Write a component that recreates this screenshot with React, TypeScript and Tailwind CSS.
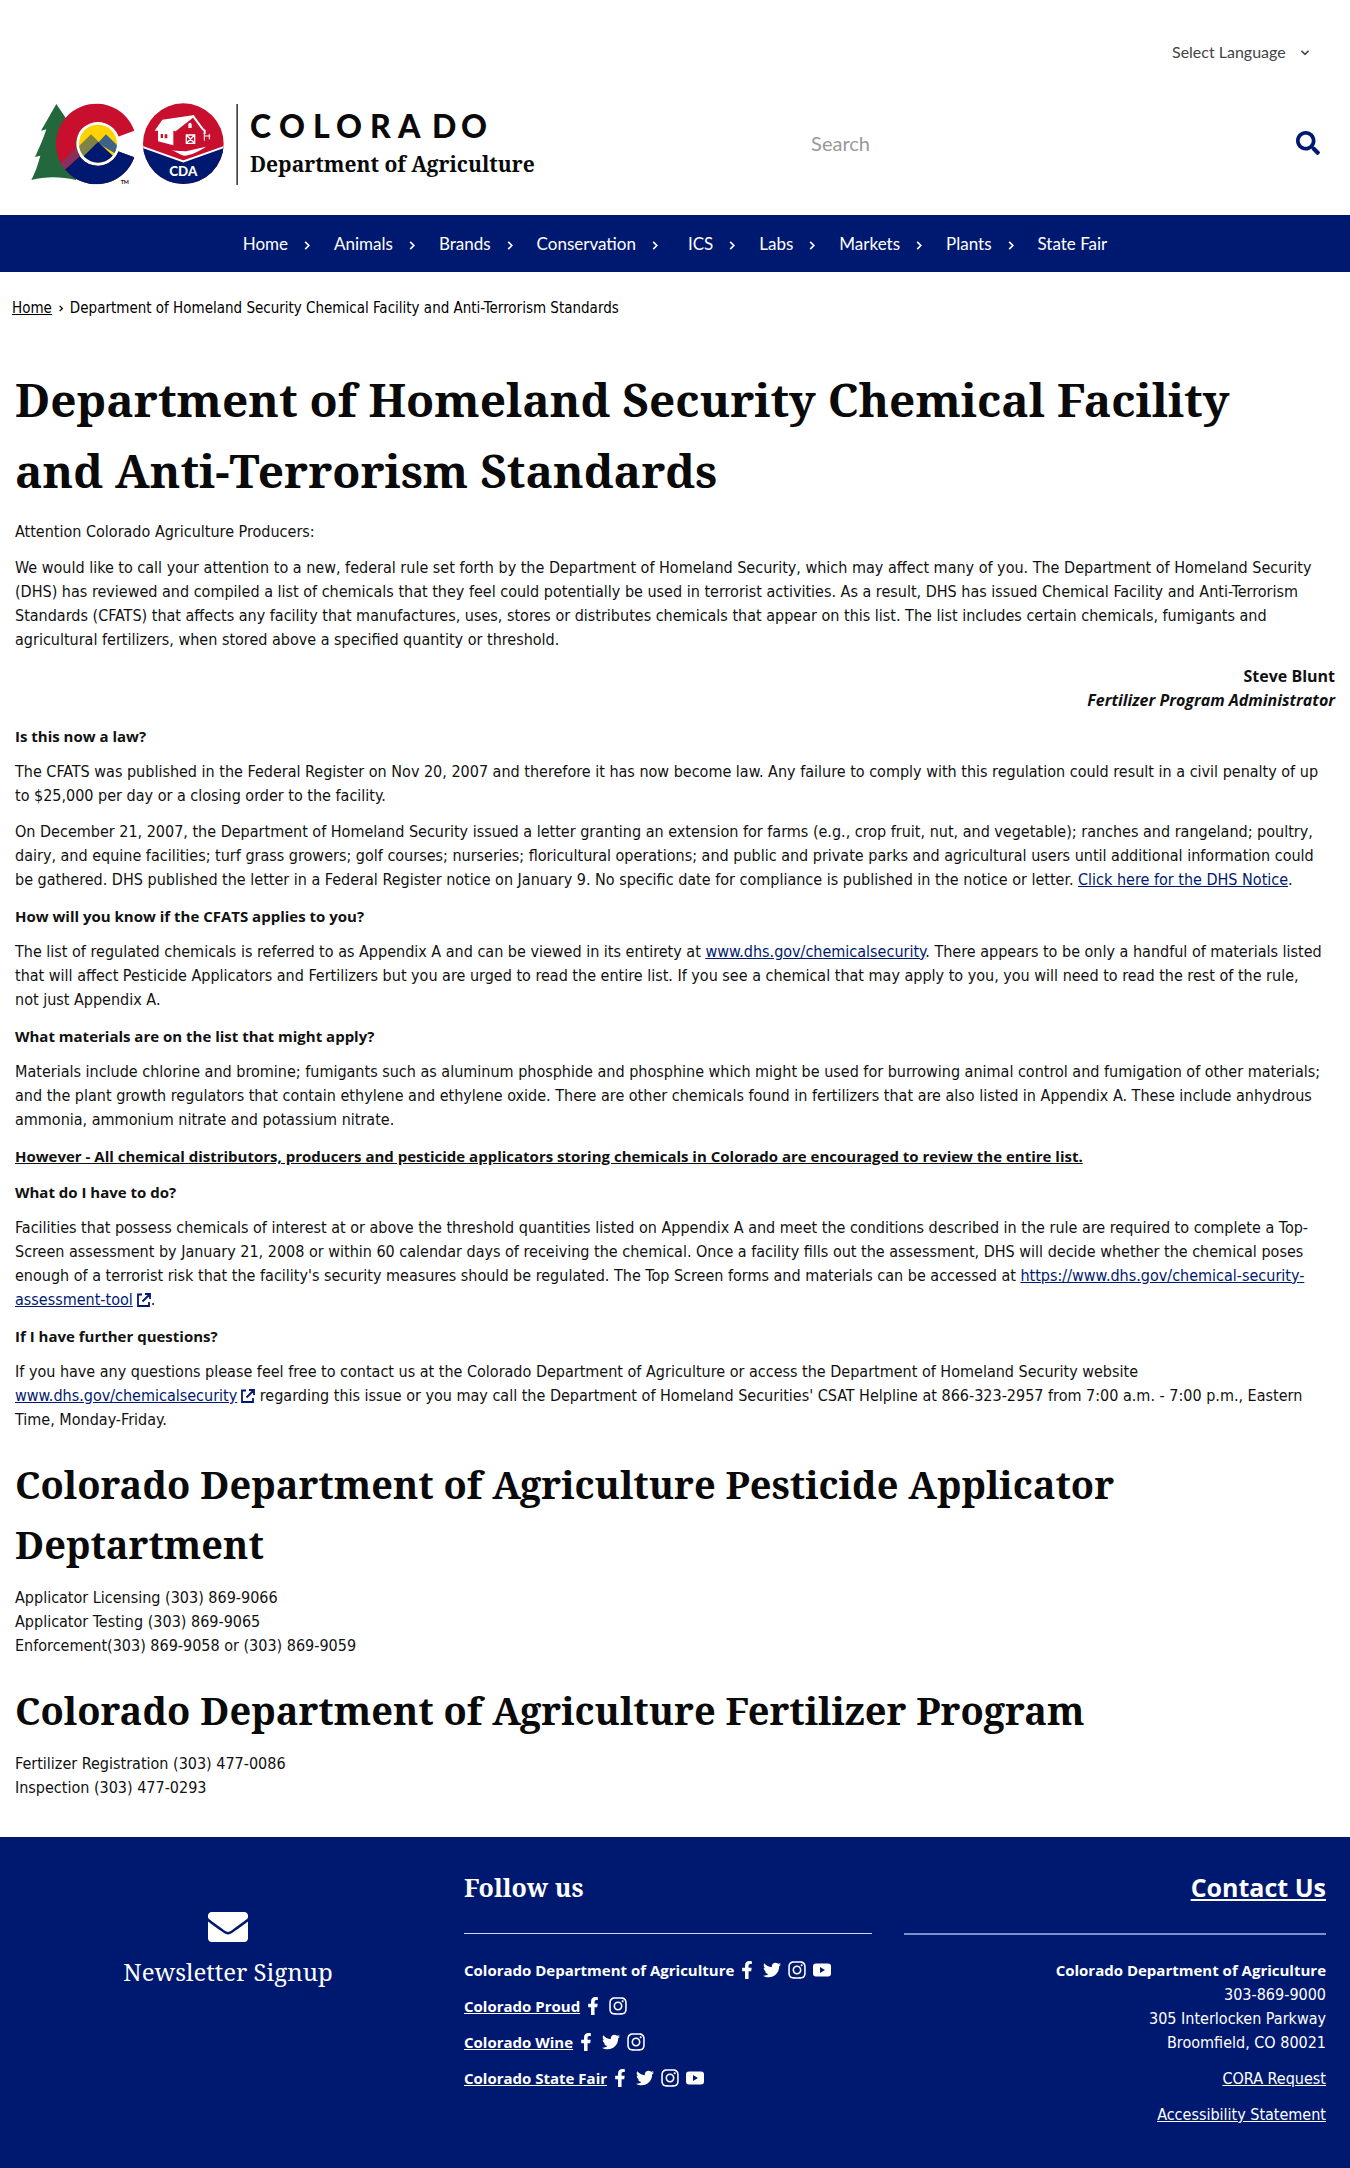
import React from "react";
import { FaEnvelope, FaFacebookF, FaInstagram, FaSearch, FaTwitter } from "react-icons/fa";

const NAV = ["Home", "Animals", "Brands", "Conservation", "ICS", "Labs", "Markets", "Plants", "State Fair"];

function Logo() {
  return (
    <svg viewBox="0 0 512 84" className="h-[84px] w-[512px]" role="img" aria-label="Colorado Department of Agriculture">
      <defs>
        <clipPath id="disc">
          <circle cx="216" cy="137" r="57" />
        </clipPath>
        <clipPath id="cshape">
          <path d="M325 98A121 121 0 1 0 325 178L276 160A65 65 0 1 1 276 116Z" />
        </clipPath>
        <clipPath id="seal">
          <circle cx="148" cy="137" r="121" />
        </clipPath>
      </defs>
      <g transform="translate(-4 -5) scale(0.3333)">
        <path
          d="M91 18L45 98L61 94C52 122 40 150 27 177L43 173C36 200 27 225 16 246C60 235 105 236 150 246L170 120L120 61Z"
          fill="#23683d"
        />
        <g clipPath="url(#cshape)">
          <rect x="90" y="10" width="240" height="260" fill="#c8102e" />
          <path d="M90 210L160 140L160 180L120 212L90 240Z" fill="#8a2f5b" />
          <path d="M112 220L165 172L216 137L325 150L325 270L112 270Z" fill="#001970" />
        </g>
        <circle cx="216" cy="137" r="65" fill="#fff" />
        <g clipPath="url(#disc)">
          <rect x="150" y="70" width="140" height="140" fill="#ffd200" />
          <path d="M150 153L195 109L219 132L216 150L150 210Z" fill="#7f8446" />
          <path d="M216 134L240 109L290 158L290 180L240 150Z" fill="#3d6488" />
          <path d="M145 202L216 132L290 200V210H145Z" fill="#001970" />
        </g>
        <text x="284" y="258" fontSize="16" fontWeight="700" className="font-['Lato',sans-serif]" fill="#111">
          TM
        </text>
      </g>
      <g transform="translate(104 -5) scale(0.3333)">
        <g clipPath="url(#seal)">
          <rect x="20" y="10" width="260" height="260" fill="#c8102e" />
          <path d="M20 145L148 191L276 145V270H20Z" fill="#001970" />
          <path d="M20 145L148 190L276 145" fill="none" stroke="#fff" strokeWidth="6" />
        </g>
        <path d="M62 98L85 65L182 51L124 98L118 98L118 142L72 130L72 98Z" fill="#fff" />
        <path d="M80 108H87V120H80ZM92 109H100V121H92Z" fill="#c8102e" />
        <path d="M122 98L178 55L205 92L212 98V108" fill="none" stroke="#fff" strokeWidth="6" />
        <path d="M163 90V80A5 6 0 0 1 173 80V90Z" fill="#fff" />
        <path d="M157 111H182V136H157ZM157 111L182 136M182 111L157 136" fill="none" stroke="#fff" strokeWidth="4" />
        <path d="M211 106V128M226 108V124M211 114H229" fill="none" stroke="#fff" strokeWidth="3" />
        <path d="M112 156C130 160 140 158 156 160L216 146C195 160 172 172 150 173C138 170 128 162 112 156Z" fill="#fff" />
        <text
          x="148"
          y="235"
          textAnchor="middle"
          fontSize="40"
          fontWeight="900"
          fill="#fff"
          className="font-['Lato',sans-serif]"
        >
          CDA
        </text>
        <rect x="307" y="18" width="5" height="243" fill="#444" />
      </g>
      <text
        x="220 249 283 306 340 368 402 431"
        y="35"
        fontSize="32"
        fontWeight="900"
        className="font-['Lato',sans-serif]"
        fill="#0a0a0a"
      >
        COLORADO
      </text>
      <text x="220" y="69" fontSize="21" fontWeight="700" className="font-['Noto_Serif',serif]" fill="#0a0a0a">
        Department of Agriculture
      </text>
    </svg>
  );
}

function Chevron({ className }: { className: string }) {
  return (
    <svg viewBox="0 0 6 10" className={className} fill="none" stroke="currentColor" strokeWidth="1.8" aria-hidden="true">
      <path d="M1 1L5 5L1 9" />
    </svg>
  );
}

function ExternalIcon() {
  return (
    <svg
      viewBox="0 0 14 14"
      className="ml-1 inline-block size-[14px] align-[-2px] text-[#001970]"
      fill="none"
      stroke="currentColor"
      strokeWidth="1.8"
      aria-hidden="true"
    >
      <path d="M5 1.5H1V13H12V9M8 1H13V6M13 1L5.5 8.5" />
    </svg>
  );
}

function YouTubeIcon() {
  return (
    <svg viewBox="0 0 18 18" className="size-[18px]" fill="currentColor" aria-hidden="true">
      <path
        fillRule="evenodd"
        d="M3 2.5H15Q18 2.5 18 5.5V12.5Q18 15.5 15 15.5H3Q0 15.5 0 12.5V5.5Q0 2.5 3 2.5ZM7 6V12L12 9Z"
      />
    </svg>
  );
}

const ICONS = {
  facebook: <FaFacebookF className="size-[18px]" />,
  twitter: <FaTwitter className="size-[18px]" />,
  instagram: <FaInstagram className="size-5" />,
  youtube: <YouTubeIcon />,
};

type Network = keyof typeof ICONS;

const SOCIAL: { name: string; linked: boolean; networks: Network[] }[] = [
  { name: "Colorado Department of Agriculture", linked: false, networks: ["facebook", "twitter", "instagram", "youtube"] },
  { name: "Colorado Proud", linked: true, networks: ["facebook", "instagram"] },
  { name: "Colorado Wine", linked: true, networks: ["facebook", "twitter", "instagram"] },
  { name: "Colorado State Fair", linked: true, networks: ["facebook", "twitter", "instagram", "youtube"] },
];

function A({ children }: { children: React.ReactNode }) {
  return (
    <a href="#" className="text-[#001970] underline">
      {children}
    </a>
  );
}

function Q({ children }: { children: React.ReactNode }) {
  return <p className="font-['Open_Sans',sans-serif] text-[15px] leading-6 font-bold">{children}</p>;
}

function H2({ children }: { children: React.ReactNode }) {
  return (
    <h2 className="mt-[10px] font-['Noto_Serif',serif] text-[38px] leading-[60px] font-bold text-[#0a0a0a]">{children}</h2>
  );
}

export default function App() {
  return (
    <div className="min-h-screen bg-white font-['DejaVu_Sans_Condensed','DejaVu_Sans',sans-serif] text-base leading-6 text-[#111]">
      <header>
        <div className="flex justify-end pt-10 pr-10">
          <div className="relative">
            <select
              aria-label="Select Language"
              className="appearance-none bg-transparent pr-6 font-['Lato',sans-serif] text-base leading-6 text-[#444] outline-none"
            >
              <option>Select Language</option>
            </select>
            <Chevron className="pointer-events-none absolute top-2 right-0.5 h-[9px] w-[6px] rotate-90 text-[#444]" />
          </div>
        </div>
        <div className="flex items-center justify-between pt-[38px] pr-[30px] pb-7 pl-[30px]">
          <a href="#">
            <Logo />
          </a>
          <form className="flex w-[41%] items-center pb-1" onSubmit={(e) => e.preventDefault()}>
            <input
              type="search"
              aria-label="Search"
              placeholder="Search"
              className="min-w-0 flex-1 bg-transparent pl-5 font-['Lato',sans-serif] text-xl outline-none placeholder:text-[#999]"
            />
            <button type="submit" aria-label="Submit search" className="text-[#001970]">
              <FaSearch className="size-6" />
            </button>
          </form>
        </div>
      </header>

      <nav className="bg-[#001970] font-['Lato',sans-serif] text-[17px] text-white">
        <ul className="flex h-[57px] items-center justify-center gap-6">
          {NAV.map((label, i) => (
            <li key={label} className={label === "Conservation" ? "mr-1.5" : ""}>
              <a href="#" className="flex items-center gap-4">
                {label}
                {i < NAV.length - 1 && <Chevron className="mt-1 h-[9px] w-[6px]" />}
              </a>
            </li>
          ))}
        </ul>
      </nav>

      <nav aria-label="Breadcrumb" className="px-3 pt-6">
        <ol className="flex items-center text-[15px] text-black">
          <li>
            <a href="#" className="underline">
              Home
            </a>
          </li>
          <li aria-hidden="true" className="px-[7px]">
            <Chevron className="h-[7px] w-[4px]" />
          </li>
          <li>Department of Homeland Security Chemical Facility and Anti-Terrorism Standards</li>
        </ol>
      </nav>

      <main className="flex flex-col gap-3 px-[15px] pt-11 pb-[37px]">
        <h1 className="mb-[2px] pr-10 font-['Noto_Serif',serif] text-[46px] leading-[71px] font-bold text-[#0a0a0a]">
          Department of Homeland Security Chemical Facility and Anti-Terrorism Standards
        </h1>
        <p>Attention Colorado Agriculture Producers:</p>
        <p>
          We would like to call your attention to a new, federal rule set forth by the Department of Homeland Security, which
          may affect many of you. The Department of Homeland Security (DHS) has reviewed and compiled a list of chemicals that
          they feel could potentially be used in terrorist activities. As a result, DHS has issued Chemical Facility and
          Anti-Terrorism Standards (CFATS) that affects any facility that manufactures, uses, stores or distributes chemicals
          that appear on this list. The list includes certain chemicals, fumigants and agricultural fertilizers, when stored
          above a specified quantity or threshold.
        </p>
        <p className="text-right font-['Open_Sans',sans-serif] text-base leading-6 font-bold">
          Steve Blunt
          <br />
          <em>Fertilizer Program Administrator</em>
        </p>
        <Q>Is this now a law?</Q>
        <p>
          The CFATS was published in the Federal Register on Nov 20, 2007 and therefore it has now become law. Any failure to
          comply with this regulation could result in a civil penalty of up to $25,000 per day or a closing order to the
          facility.
        </p>
        <p>
          On December 21, 2007, the Department of Homeland Security issued a letter granting an extension for farms (e.g.,
          crop fruit, nut, and vegetable); ranches and rangeland; poultry, dairy, and equine facilities; turf grass growers;
          golf courses; nurseries; floricultural operations; and public and private parks and agricultural users until
          additional information could be gathered. DHS published the letter in a Federal Register notice on January 9. No
          specific date for compliance is published in the notice or letter. <A>Click here for the DHS Notice</A>.
        </p>
        <Q>How will you know if the CFATS applies to you?</Q>
        <p>
          The list of regulated chemicals is referred to as Appendix A and can be viewed in its entirety at{" "}
          <A>www.dhs.gov/chemicalsecurity</A>. There appears to be only a handful of materials listed that will affect
          Pesticide Applicators and Fertilizers but you are urged to read the entire list. If you see a chemical that may
          apply to you, you will need to read the rest of the rule, not&nbsp;just Appendix A.
        </p>
        <Q>What materials are on the list that might apply?</Q>
        <p>
          Materials include chlorine and bromine; fumigants such as aluminum phosphide and phosphine which might be used for
          burrowing animal control and fumigation of other materials; and the plant growth regulators that contain ethylene
          and ethylene oxide. There are other chemicals found in fertilizers that are also listed in Appendix A. These include
          anhydrous ammonia, ammonium nitrate and potassium nitrate.
        </p>
        <Q>
          <span className="underline">
            However - All chemical distributors, producers and pesticide applicators storing chemicals in Colorado are
            encouraged to review the entire list.
          </span>
        </Q>
        <Q>What do I have to do?</Q>
        <p>
          Facilities that possess chemicals of interest at or above the threshold quantities listed on Appendix A and meet the
          conditions described in the rule are required to complete a Top-Screen assessment by January 21, 2008 or within 60
          calendar days of receiving the chemical. Once a facility fills out the assessment, DHS will decide whether the
          chemical poses enough of a terrorist risk that the facility's security measures should be regulated. The Top Screen
          forms and materials can be accessed at <A>https://www.dhs.gov/chemical-security-assessment-tool</A>
          <ExternalIcon />.
        </p>
        <Q>If I have further questions?</Q>
        <p>
          If you have any questions please feel free to contact us at the Colorado Department of Agriculture or access the
          Department of Homeland Security website <A>www.dhs.gov/chemicalsecurity</A>
          <ExternalIcon /> regarding this issue or you may call the Department of Homeland Securities' CSAT Helpline at
          866-323-2957 from 7:00 a.m. - 7:00 p.m., Eastern Time, Monday-Friday.
        </p>
        <H2>Colorado Department of Agriculture Pesticide Applicator Deptartment</H2>
        <p>
          Applicator Licensing (303) 869-9066
          <br />
          Applicator Testing (303) 869-9065
          <br />
          Enforcement(303) 869-9058 or (303) 869-9059
        </p>
        <H2>Colorado Department of Agriculture Fertilizer Program</H2>
        <p>
          Fertilizer Registration (303) 477-0086
          <br />
          Inspection (303) 477-0293
        </p>
      </main>

      <footer className="grid grid-cols-[440px_1fr_422px] bg-[#001970] px-6 pb-[42px] text-white">
        <a href="#" className="mr-8 flex flex-col items-center pt-[70px]">
          <FaEnvelope className="size-10" />
          <span className="mt-1 font-['Noto_Serif',serif] text-2xl leading-[42px]">Newsletter Signup</span>
        </a>
        <section className="mr-8 pt-8">
          <h2 className="font-['Noto_Serif',serif] text-[25px] leading-9 font-bold">Follow us</h2>
          <hr className="mt-7 border-t border-[#d5dbee]" />
          <ul className="mt-6 flex flex-col gap-3">
            {SOCIAL.map((row) => (
              <li
                key={row.name}
                className="flex h-6 items-center font-['Open_Sans',sans-serif] text-[15px] leading-6 font-bold"
              >
                {row.linked ? (
                  <a href="#" className="underline">
                    {row.name}
                  </a>
                ) : (
                  <span>{row.name}</span>
                )}
                {row.networks.map((n) => (
                  <a key={n} href="#" aria-label={row.name + " on " + n} className="flex w-[25px] justify-center">
                    {ICONS[n]}
                  </a>
                ))}
              </li>
            ))}
          </ul>
        </section>
        <section className="pt-8 text-right">
          <h2 className="font-['Open_Sans',sans-serif] text-[25px] leading-9 font-bold">
            <a href="#" className="underline">
              Contact Us
            </a>
          </h2>
          <hr className="mt-7 border-t-2 border-[#7d90cc]" />
          <p className="mt-[23px]">
            <strong className="font-['Open_Sans',sans-serif] text-[15px] font-bold">
              Colorado Department of Agriculture
            </strong>
            <br />
            303-869-9000
            <br />
            305 Interlocken Parkway
            <br />
            Broomfield, CO 80021
          </p>
          <p className="mt-3">
            <a href="#" className="underline">
              CORA Request
            </a>
          </p>
          <p className="mt-3">
            <a href="#" className="underline">
              Accessibility Statement
            </a>
          </p>
        </section>
      </footer>
    </div>
  );
}
